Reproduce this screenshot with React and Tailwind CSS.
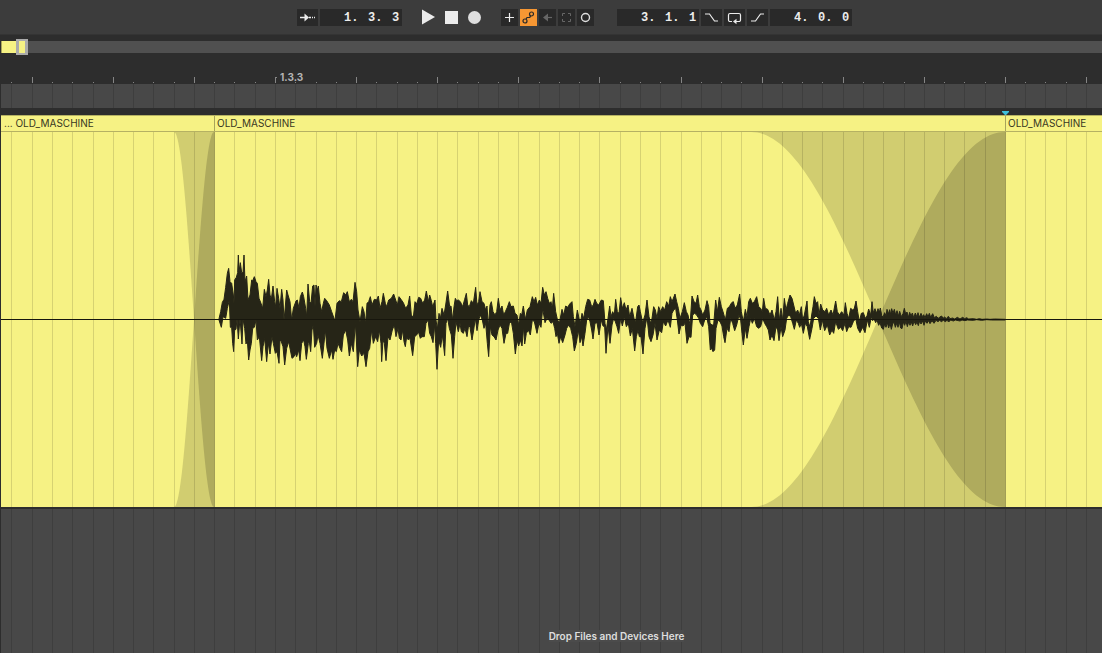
import { useState } from 'react';

// Timeline drawings share one 1101 unit wide space
const WIDTH = 1101;
const BODY_HEIGHT = 375;
const MID = 187.5;

const gridLines = Array.from({ length: 54 }, (_, i) => ({
  x: Math.floor(10.93 + i * 20.275),
  major: i % 4 === 1,
}));

const crossfades = [
  { id: 'in', start: 173, end: 213 },
  { id: 'out', start: 750, end: 1004 },
];

// Sample peaks, upper and lower side, three units to a pixel
const waveTop = `57,236 62,215 67,187 72,178 77,142 82,100 86,85 90,125 95,130 100,165 102,190 104,120 109,112 113,98 115,45
117,95 121,68 125,98 129,98 132,45 135,125 140,108 144,180 150,165 155,120 158,122 163,110 168,125 172,130 177,175 183,190
188,205 193,148 198,170 202,150 206,118 210,165 214,178 219,138 224,185 227,200 231,145 236,175 240,205 245,148 249,180
252,240 255,210 260,150 264,165 270,185 275,240 280,205 288,183 292,180 297,205 301,170 307,156 311,170 317,205 320,230
324,132 329,185 333,190 338,138 342,135 345,200 348,135 352,150 355,138 360,190 365,215 370,190 374,175 380,182 388,195
395,215 402,235 405,240 411,190 418,182 424,185 431,158 437,165 442,155 448,185 454,178 459,185 465,127 470,155 474,210
480,245 487,200 492,215 497,250 501,190 506,185 511,170 516,195 523,178 530,180 535,168 540,205 546,185 550,160 556,190
560,200 566,180 574,175 581,162 587,180 592,195 597,170
603,178 610,188 617,205 624,195 629,168 634,225 640,232 645,185 650,192 656,172 662,175 668,190 674,180 679,153 685,185
689,165 694,182 698,200 705,180 708,240 712,268 717,220 721,235 726,205 732,225 737,195 743,153 749,200 753,198 758,240
762,200 766,175 770,182 775,180 781,185 788,200 794,178 799,160 803,195 808,200 814,182 820,190 827,142 831,195 836,185
840,155 846,185 852,190 857,210 861,198 865,260 870,195 874,185 879,215 885,225 890,215 895,175 900,210 906,198 911,225
916,215 922,202 928,185 933,200 940,198 945,220 951,225 956,255 961,220 965,225 970,198 976,238 982,210 990,200 997,170
1002,185 1007,172 1012,195 1018,180 1023,190 1028,142 1033,165 1038,155 1043,175 1048,190 1053,185 1057,205 1061,160
1067,215 1072,238 1078,250 1086,208 1091,225 1097,198 1103,202 1109,192 1116,185 1120,230 1125,260 1132,210 1137,235
1142,245 1146,220 1151,235 1157,200 1163,178 1169,180 1175,200 1180,195 1185,178 1190,190 1196,195
1204,180 1210,182 1215,250 1219,270 1224,235 1229,198 1233,230 1238,215 1243,225 1247,178 1252,215 1257,220 1262,173
1267,205 1273,188 1278,210 1284,195 1289,230 1296,205 1302,235 1307,245 1313,200 1317,195 1321,215 1328,248 1335,225
1341,180 1347,230 1352,250 1356,235 1361,200 1366,210 1371,235 1376,200 1382,215 1388,200 1394,210 1400,185 1406,198
1411,170 1416,185 1420,175 1425,162 1430,185 1435,205 1440,235 1447,215 1453,188 1459,215 1464,225 1470,255 1476,168
1482,185 1488,190 1493,165 1498,200 1503,210 1508,225 1515,210 1521,182 1526,200 1530,250 1536,255 1541,255 1547,180
1552,215 1558,172 1564,200 1569,215 1576,240 1582,205 1588,200 1595,188 1600,185 1605,205 1612,195 1619,162 1624,215
1630,245 1636,208 1641,230 1646,185 1651,175 1657,190 1663,185 1670,170 1676,200 1682,205 1687,215 1691,175 1696,205
1703,208 1710,225 1716,210 1723,240 1728,215 1733,170 1738,240 1743,205 1748,240 1753,175 1758,210 1763,190 1770,165
1776,175 1781,195 1787,220 1793,210 1798,225
1804,200 1808,240 1813,225 1821,183 1825,245 1830,262 1835,225 1839,200 1843,170 1848,190 1853,185 1857,225 1862,192
1868,210 1875,215 1880,205 1886,225 1893,210 1899,225 1907,183 1912,215 1918,225 1925,215 1932,225 1936,188 1941,220
1946,235 1952,205 1958,210 1963,205 1968,183 1973,215 1978,245 1984,220 1990,218 1996,235 2001,228 2006,207 2012,225
2016,185 2020,218 2025,206 2029,220 2034,206 2038,217 2041,204 2045,226 2049,232 2054,218 2058,228 2061,208 2065,222
2069,209 2072,224 2075,206 2079,220 2083,208 2087,225 2091,212 2095,228 2099,214 2104,230 2109,221 2113,205 2117,222
2121,216 2125,232 2129,217 2133,228 2137,219 2141,233 2146,219 2150,230 2154,218 2158,232 2163,220 2167,230 2171,224
2175,233 2180,221 2184,231 2188,220 2192,232 2198,221 2203,233 2209,229 2215,235 2219,231 2225,228 2229,235 2234,231
2239,236 2245,229 2250,236 2258,234 2264,237 2272,232 2280,237 2288,232 2294,236 2300,233 2306,237 2320,236 2330,238
2338,236 2346,238 2360,237 2370,238 2384,237 2416,238`;

const waveBottom = `57,240 64,262 69,230 77,235 82,205 88,180 91,262 95,262 98,310 101,335 104,270 108,268 111,235 115,297 120,235
126,312 129,237 134,265 138,312 142,300 146,360 150,330 154,310 158,265 163,262 168,240 172,300 178,290 185,362 189,320
194,295 200,365 205,310 210,342 216,290 220,310 226,340 231,335 237,370 240,300 244,305 249,320 254,375 260,325 266,305
271,330 276,355 282,350 286,340 290,350 296,330 300,362 305,310 311,300 315,320 319,358 325,310 328,305 332,335 336,270
340,255 344,322 350,310 354,285 360,310 367,355 372,310 376,270 381,325 388,355 395,330 399,358 404,330 409,335 414,310
420,325 425,335 430,285 437,270 443,300 448,348 454,310 460,335 466,250 469,300 473,380 478,330 485,348 492,340 498,380
504,335 509,325 515,270 520,310 527,290 533,305 538,270 543,310 545,365 549,300 553,310 558,362 564,290 570,300 577,270
583,255 588,290 594,265 598,295
603,300 608,270 612,305 616,320 620,290 625,300 630,295 638,347 644,290 650,285 655,275 661,295 666,290 673,290 678,250
684,240 689,280 694,290 699,308 704,255 707,310 711,388 716,300 722,322 727,285 730,310 734,347 738,250 743,235 748,265
754,285 759,355 764,290 768,245 775,275 780,250 784,275 790,280 795,265 801,290 806,255 810,262 816,300 821,270 826,235
831,272 836,240 841,225 847,240 852,265 857,250 862,310 866,350 871,260 876,285 882,290 888,300 894,270 900,255 906,265
912,310 918,280 923,280 929,245 935,250 940,280 946,342 951,300 956,318 961,300 966,318 971,260 974,312 979,280 985,270
991,285 997,240 1003,245 1011,280 1017,250 1023,262 1028,205 1035,248 1041,235 1047,240 1053,250 1059,245 1064,265
1068,290 1072,280 1077,310 1082,290 1088,308 1095,285 1100,265 1106,255 1112,265 1118,290 1123,333 1129,310 1135,270
1140,308 1145,290 1149,318 1155,280 1160,240 1165,230 1170,245 1175,270 1179,297 1185,250 1191,248 1197,285
1204,240 1209,258 1214,260 1218,340 1224,258 1230,310 1236,255 1241,235 1246,245 1251,260 1256,280 1262,235 1267,258
1273,230 1279,260 1285,250 1291,288 1297,265 1304,333 1309,290 1314,270 1318,290 1323,290 1329,342 1335,265 1341,230
1347,290 1353,305 1359,285 1365,250 1371,300 1378,270 1385,278 1390,245 1397,258 1404,240 1411,262 1416,220 1421,210
1427,205 1432,240 1437,282 1443,255 1449,258 1455,250 1461,310 1467,290 1473,292 1478,225 1484,220 1490,225 1496,235
1501,250 1508,260 1514,240 1520,230 1526,260 1531,330 1535,325 1539,335 1544,330 1548,265 1554,240 1560,245 1566,258
1571,290 1575,308 1581,265 1587,275 1592,235 1598,250 1604,272 1610,255 1617,225 1622,240 1626,280 1630,315 1636,265
1641,295 1647,260 1652,235 1657,250 1663,235 1670,260 1676,265 1682,260 1688,235 1694,250 1700,260 1705,270 1710,300
1716,285 1722,302 1728,260 1733,270 1737,302 1743,260 1748,290 1755,270 1760,235 1766,225 1772,230 1778,250 1783,268
1789,240 1795,250 1799,262
1804,250 1810,280 1816,250 1822,260 1829,298 1836,265 1841,235 1848,228 1855,235 1861,270 1867,240 1874,272 1882,255
1889,285 1896,270 1901,280 1907,245 1915,268 1922,262 1928,272 1935,250 1940,275 1946,260 1953,262 1960,245 1967,235
1973,265 1980,278 1988,262 1995,278 2002,240 2008,262 2014,230 2018,242 2022,236 2027,248 2031,240 2036,256 2040,248
2045,264 2050,268 2054,252 2058,262 2062,248 2066,264 2070,250 2074,268 2078,252 2082,246 2086,262 2090,250 2094,262
2098,246 2102,264 2106,266 2110,246 2114,256 2118,244 2122,260 2126,246 2130,256 2134,246 2138,258 2142,244 2147,254
2151,246 2155,257 2159,243 2163,252 2168,243 2172,256 2176,243 2181,250 2186,242 2190,251 2196,242 2202,250 2208,241
2214,245 2219,241 2224,245 2230,241 2236,245 2241,241 2246,246 2252,240 2260,243 2266,240 2280,243 2286,240 2295,242
2302,240 2320,241 2330,239 2345,241 2360,239 2375,240 2416,240`;

const wavePoints = [...waveTop.split(/\s+/), ...waveBottom.split(/\s+/).reverse()].join(' ');

// S-curve between two x positions, direction 1 runs from top to bottom
const curvePoints = (start, end, direction, from = 0, to = 1) => {
  const points = [];
  for (let i = 0; i <= 40; i++) {
    const t = from + ((to - from) * i) / 40;
    const x = start + (end - start) * t;
    const y = MID - direction * MID * Math.cos(Math.PI * t);
    points.push(`${x.toFixed(2)},${y.toFixed(2)}`);
  }
  return points;
};

function Grid({ color }) {
  return (
    <svg
      className="absolute inset-0 h-full w-full"
      viewBox={`0 0 ${WIDTH} 100`}
      preserveAspectRatio="none"
      shapeRendering="crispEdges"
      aria-hidden="true"
    >
      {gridLines.map((line) => (
        <rect key={line.x} x={line.x} y="0" width="1" height="100" fill={color} />
      ))}
    </svg>
  );
}

function Position({ label, value }) {
  const [parts, setParts] = useState(value);
  const names = ['bars', 'beats', 'sixteenths'];

  return (
    <div role="group" aria-label={label} className="flex h-[17px] w-[82px] items-center bg-[#292929] pl-6">
      {parts.map((part, i) => (
        <input
          key={names[i]}
          aria-label={`${label} ${names[i]}`}
          value={part}
          onChange={(e) => setParts(parts.map((p, j) => (j === i ? e.target.value : p)))}
          className={`h-[17px] bg-transparent pt-px font-['Liberation_Mono',monospace] text-xs leading-4 font-bold text-[#ececec] outline-none ${
            i === 2 ? 'w-2' : 'w-6'
          }`}
        />
      ))}
    </div>
  );
}

function ToolButton({ label, active = false, wide = false, dim = false, children }) {
  return (
    <button
      type="button"
      aria-label={label}
      className={`flex h-[17px] items-center justify-center ${wide ? 'w-[21px]' : 'w-[17px]'} ${
        active ? 'bg-[#f79733] text-[#292929]' : dim ? 'bg-[#292929] text-[#666666]' : 'bg-[#292929] text-[#ececec]'
      }`}
    >
      <svg
        className={wide ? 'h-[17px] w-[21px]' : 'h-[17px] w-[17px]'}
        viewBox={wide ? '0 0 21 17' : '0 0 17 17'}
        fill="none"
        stroke="currentColor"
        aria-hidden="true"
      >
        {children}
      </svg>
    </button>
  );
}

function TransportButton({ label, children }) {
  return (
    <button type="button" aria-label={label} className="h-4 w-[13px] text-[#ececec]">
      <svg className="h-4 w-[13px] overflow-visible" viewBox="0 0 13 16" fill="currentColor" aria-hidden="true">
        {children}
      </svg>
    </button>
  );
}

function Toolbar() {
  return (
    <header className="flex h-[35px] items-center border-b border-[#343434] bg-[#3c3c3c] pl-[297px]">
      <div className="flex gap-0.5">
        <ToolButton label="Follow" wide>
          <path d="M3 8.5h5M12 8.5h2M15 8.5h1M17 8.5h1" strokeWidth="1.4" />
          <path d="M7.5 4.5l4.5 4-4.5 4z" fill="currentColor" stroke="none" />
        </ToolButton>
        <Position label="Arrangement position" value={['1.', '3.', '3']} />
      </div>

      <div className="ml-5 flex gap-2.5">
        <TransportButton label="Play">
          <path d="M0 0.5L13 8L0 15.5z" />
        </TransportButton>
        <TransportButton label="Stop">
          <path d="M0 2h13v13h-13z" />
        </TransportButton>
        <TransportButton label="Record">
          <circle cx="6.5" cy="8.5" r="6.5" fill="#dedede" />
        </TransportButton>
      </div>

      <div className="ml-5 flex gap-0.5">
        <ToolButton label="MIDI overdub">
          <path d="M4 8.5h9M8.5 4v9" strokeWidth="1.2" />
        </ToolButton>
        <ToolButton label="Automation arm" active>
          <circle cx="11.5" cy="5" r="2" strokeWidth="1.2" />
          <circle cx="5" cy="12" r="2" strokeWidth="1.2" />
          <path d="M10.5 6.7L9.8 8.5H7L6 10.2" strokeWidth="1.2" />
        </ToolButton>
        <ToolButton label="Re-enable automation" dim>
          <path d="M7 8.5h6" strokeWidth="1.2" />
          <path d="M9 4.5l-5 4 5 4z" fill="currentColor" stroke="none" />
        </ToolButton>
        <ToolButton label="Capture MIDI" dim>
          <path d="M4.5 7V4.5H7M10 4.5h2.5V7M12.5 10v2.5H10M7 12.5H4.5V10" />
        </ToolButton>
        <ToolButton label="Session record">
          <circle cx="8.5" cy="8.5" r="4" stroke="#dedede" strokeWidth="1.4" />
        </ToolButton>
      </div>

      <div className="ml-[23px] flex gap-0.5">
        <Position label="Loop start" value={['3.', '1.', '1']} />
        <ToolButton label="Punch in" wide>
          <path d="M4 5h4.5l5 7H17" strokeWidth="1.2" />
        </ToolButton>
        <ToolButton label="Loop" wide>
          <path d="M8 12.5H6A1.5 1.5 0 0 1 4.5 11V6A1.5 1.5 0 0 1 6 4.5h9A1.5 1.5 0 0 1 16.5 6v5a1.5 1.5 0 0 1-1.5 1.5h-3" strokeWidth="1.2" />
          <path d="M12.5 9.8v5.4l-3.5-2.7z" fill="currentColor" stroke="none" />
        </ToolButton>
        <ToolButton label="Punch out" wide>
          <path d="M4 12h4.5l5-7H17" strokeWidth="1.2" />
        </ToolButton>
        <Position label="Loop length" value={['4.', '0.', '0']} />
      </div>
    </header>
  );
}

function Overview() {
  return (
    <div className="flex h-5 items-center pt-1">
      <div className="flex h-3 w-full items-center bg-[#505050]">
        <div className="h-3 w-[15px] border-l border-[#a8a45a] bg-[#f6f284]" />
        <button
          type="button"
          aria-label="Visible range"
          className="h-4 w-3 shrink-0 border-x-[3px] border-y-2 border-[#ababab] bg-[#f6f284]"
        />
      </div>
    </div>
  );
}

function Ruler() {
  return (
    <div className="relative h-[29px]">
      <svg
        className="absolute inset-0 h-full w-full"
        viewBox={`0 0 ${WIDTH} 29`}
        preserveAspectRatio="none"
        shapeRendering="crispEdges"
        aria-hidden="true"
      >
        {gridLines.map((line) => (
          <rect
            key={line.x}
            x={line.x}
            y={line.major ? 22 : 27}
            width="1"
            height={line.major ? 6 : 1}
            fill="#858585"
          />
        ))}
        <rect x="275" y="22" width="1" height="1" fill="#858585" />
      </svg>
      <div className="relative pt-4 pl-[279px] font-['Inter',sans-serif] text-[10px] leading-3 font-bold text-[#b4b4b4]">
        1.3.3
      </div>
    </div>
  );
}

function Clips() {
  const names = ['... OLD_MASCHINE', 'OLD_MASCHINE', 'OLD_MASCHINE'];

  return (
    <div className="grid h-[17px] grid-cols-[213fr_791fr_97fr] border-y border-[#b5b163] bg-[#f6f284]">
      {names.map((name, i) => (
        <div
          key={i}
          className={`overflow-hidden font-['Inter',sans-serif] text-[10px] leading-[14px] whitespace-nowrap text-[#38371f] ${
            i > 0 ? 'border-l border-[#a8a45a] pl-0.5' : 'pl-[3px]'
          }`}
        >
          {name}
        </div>
      ))}
    </div>
  );
}

function Waveform() {
  return (
    <svg
      className="block h-[375px] w-full"
      viewBox={`0 0 ${WIDTH} ${BODY_HEIGHT}`}
      preserveAspectRatio="none"
      role="img"
      aria-label="OLD_MASCHINE waveform"
    >
      <rect width={WIDTH} height={BODY_HEIGHT} fill="#f6f284" />

      {/* Crossfades */}
      {crossfades.map(({ id, start, end }) => (
        <g key={id}>
          <rect x={start} y="0" width={end - start} height={BODY_HEIGHT} fill="#d1cd70" />
          <polygon
            points={[
              ...curvePoints(start, end, 1, 0, 0.5),
              ...curvePoints(start, end, -1, 0, 0.5).reverse(),
            ].join(' ')}
            fill="#f6f284"
          />
          <polygon
            points={[
              ...curvePoints(start, end, 1, 0.5, 1),
              ...curvePoints(start, end, -1, 0.5, 1).reverse(),
            ].join(' ')}
            fill="#afab5d"
          />
        </g>
      ))}

      {/* Grid and clip borders */}
      <g shapeRendering="crispEdges">
        {gridLines.map((line) => (
          <rect key={line.x} x={line.x} y="0" width="1" height={BODY_HEIGHT} fill="#000000" fillOpacity="0.13" />
        ))}
        <rect x="213" y="0" width="1" height={BODY_HEIGHT} fill="#a29e56" />
        <rect x="1004" y="0" width="1" height={BODY_HEIGHT} fill="#a29e56" />
      </g>

      <polygon
        points={wavePoints}
        transform={`translate(199 108) scale(${1 / 3})`}
        fill="#262517"
        stroke="#262517"
        strokeWidth="3"
        strokeLinejoin="bevel"
      />
      <rect x="0" y="187" width={WIDTH} height="1" fill="#17160d" />
    </svg>
  );
}

export default function App() {
  return (
    <div className="flex min-h-screen flex-col bg-[#2d2d2d]">
      <Toolbar />
      <main className="flex flex-1 flex-col pl-px">
        <Overview />
        <Ruler />

        <div className="relative h-6 bg-[#484848]">
          <Grid color="#3e3e3e" />
        </div>

        {/* Insert marker */}
        <div className="grid h-[7px] grid-cols-[213fr_791fr_97fr] items-end">
          <svg className="col-start-3 -ml-[3px] h-1 w-[7px]" viewBox="0 0 7 4" fill="#3fc0dc" aria-hidden="true">
            <path d="M0 0h7v1L4 4H3L0 1z" />
          </svg>
        </div>

        <Clips />
        <Waveform />

        <section className="relative flex flex-1 items-end justify-center border-t-2 border-[#2d2d2d] bg-[#484848] pb-[11px] pl-[130px]">
          <Grid color="#3e3e3e" />
          <p className="relative bg-[#4b4b4b] font-['Inter',sans-serif] text-[10px] leading-3 font-semibold text-[#dedede]">
            Drop Files and Devices Here
          </p>
        </section>
      </main>
    </div>
  );
}
